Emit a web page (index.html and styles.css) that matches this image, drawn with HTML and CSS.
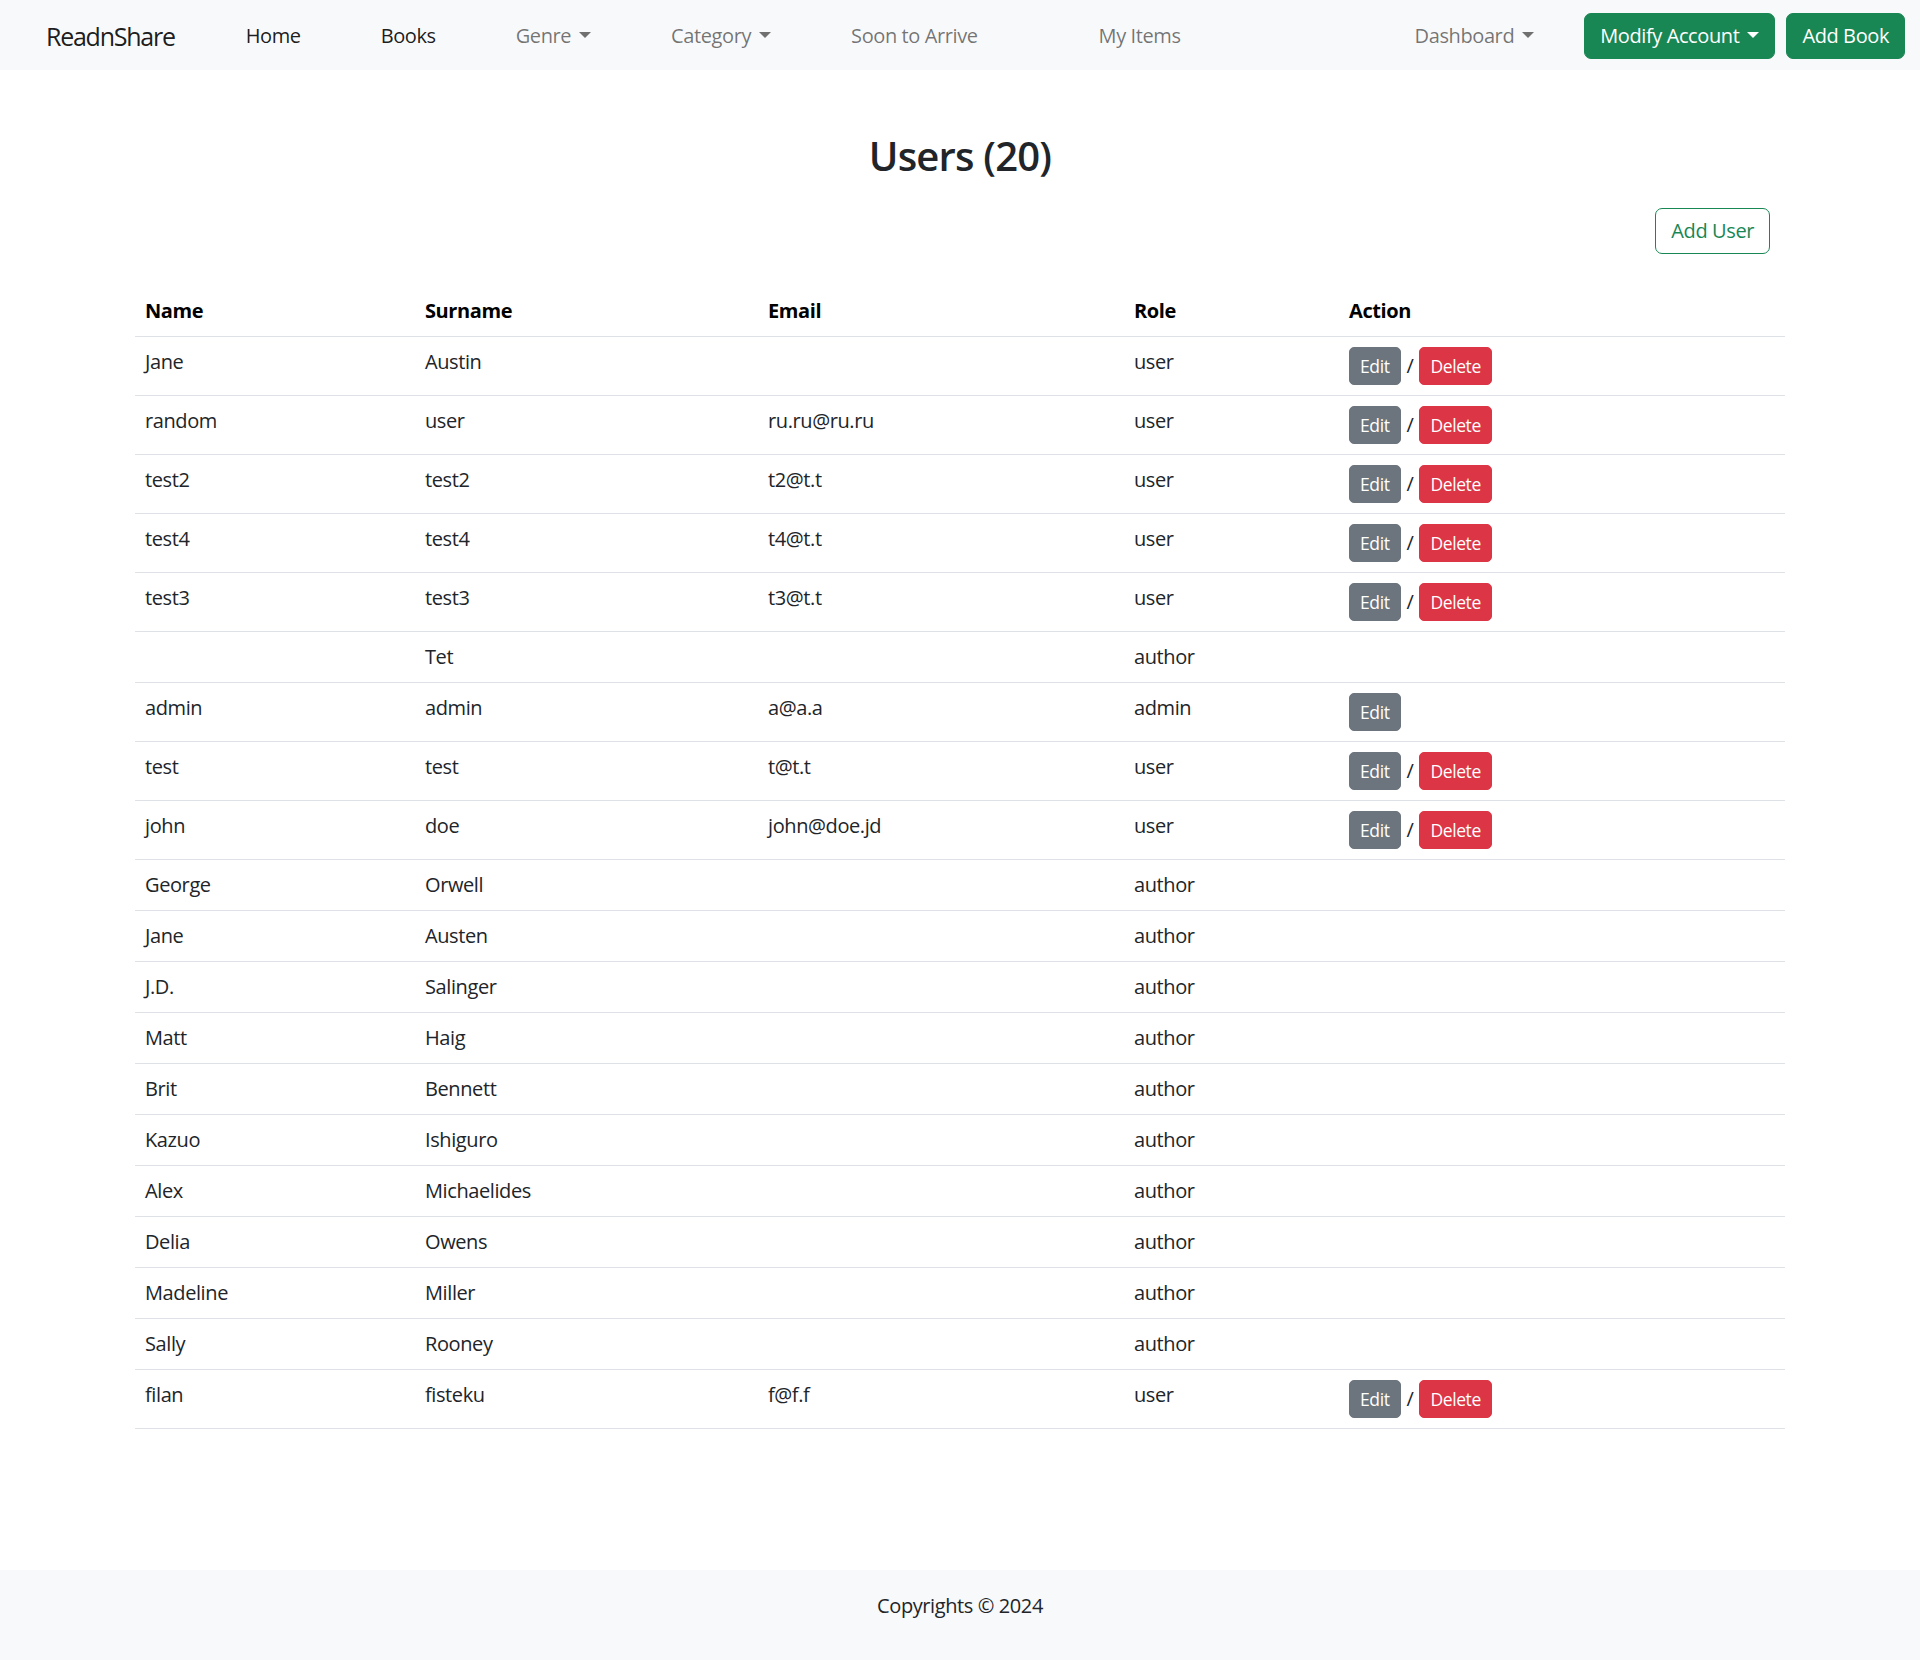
FILE: index.html
```html
<!DOCTYPE html>
<html lang="en">
<head>
<meta charset="utf-8">
<title>ReadnShare - Users</title>
<link rel="stylesheet" href="styles.css">
</head>
<body>
<nav class="navbar">
  <a class="brand" href="#">ReadnShare</a>
  <ul class="nav-main">
    <li><a class="nav-link active" href="#">Home</a></li>
    <li><a class="nav-link active" href="#">Books</a></li>
    <li><a class="nav-link dropdown" href="#">Genre</a></li>
    <li><a class="nav-link dropdown" href="#">Category</a></li>
    <li><a class="nav-link" href="#">Soon to Arrive</a></li>
    <li class="nav-spaced"><a class="nav-link" href="#">My Items</a></li>
  </ul>
  <div class="nav-right">
    <a class="nav-link dropdown dash" href="#">Dashboard</a>
    <a class="btn btn-success dropdown" href="#">Modify Account</a>
    <a class="btn btn-success" href="#">Add Book</a>
  </div>
</nav>

<main class="page">
  <h2 class="title">Users (20)</h2>
  <div class="toolbar">
    <a class="btn btn-outline-success" href="#">Add User</a>
  </div>
  <table class="table">
    <colgroup>
      <col class="c-name"><col class="c-surname"><col class="c-email"><col class="c-role"><col class="c-action">
    </colgroup>
    <thead>
      <tr><th>Name</th><th>Surname</th><th>Email</th><th>Role</th><th>Action</th></tr>
    </thead>
    <tbody>
      <tr><td>Jane</td><td>Austin</td><td></td><td>user</td><td class="act"><div class="actions"><a class="btn-sm btn-secondary" href="#">Edit</a><span>/</span><a class="btn-sm btn-danger" href="#">Delete</a></div></td></tr>
      <tr><td>random</td><td>user</td><td>ru.ru@ru.ru</td><td>user</td><td class="act"><div class="actions"><a class="btn-sm btn-secondary" href="#">Edit</a><span>/</span><a class="btn-sm btn-danger" href="#">Delete</a></div></td></tr>
      <tr><td>test2</td><td>test2</td><td>t2@t.t</td><td>user</td><td class="act"><div class="actions"><a class="btn-sm btn-secondary" href="#">Edit</a><span>/</span><a class="btn-sm btn-danger" href="#">Delete</a></div></td></tr>
      <tr><td>test4</td><td>test4</td><td>t4@t.t</td><td>user</td><td class="act"><div class="actions"><a class="btn-sm btn-secondary" href="#">Edit</a><span>/</span><a class="btn-sm btn-danger" href="#">Delete</a></div></td></tr>
      <tr><td>test3</td><td>test3</td><td>t3@t.t</td><td>user</td><td class="act"><div class="actions"><a class="btn-sm btn-secondary" href="#">Edit</a><span>/</span><a class="btn-sm btn-danger" href="#">Delete</a></div></td></tr>
      <tr><td></td><td>Tet</td><td></td><td>author</td><td></td></tr>
      <tr><td>admin</td><td>admin</td><td>a@a.a</td><td>admin</td><td class="act"><div class="actions"><a class="btn-sm btn-secondary" href="#">Edit</a></div></td></tr>
      <tr><td>test</td><td>test</td><td>t@t.t</td><td>user</td><td class="act"><div class="actions"><a class="btn-sm btn-secondary" href="#">Edit</a><span>/</span><a class="btn-sm btn-danger" href="#">Delete</a></div></td></tr>
      <tr><td>john</td><td>doe</td><td>john@doe.jd</td><td>user</td><td class="act"><div class="actions"><a class="btn-sm btn-secondary" href="#">Edit</a><span>/</span><a class="btn-sm btn-danger" href="#">Delete</a></div></td></tr>
      <tr><td>George</td><td>Orwell</td><td></td><td>author</td><td></td></tr>
      <tr><td>Jane</td><td>Austen</td><td></td><td>author</td><td></td></tr>
      <tr><td>J.D.</td><td>Salinger</td><td></td><td>author</td><td></td></tr>
      <tr><td>Matt</td><td>Haig</td><td></td><td>author</td><td></td></tr>
      <tr><td>Brit</td><td>Bennett</td><td></td><td>author</td><td></td></tr>
      <tr><td>Kazuo</td><td>Ishiguro</td><td></td><td>author</td><td></td></tr>
      <tr><td>Alex</td><td>Michaelides</td><td></td><td>author</td><td></td></tr>
      <tr><td>Delia</td><td>Owens</td><td></td><td>author</td><td></td></tr>
      <tr><td>Madeline</td><td>Miller</td><td></td><td>author</td><td></td></tr>
      <tr><td>Sally</td><td>Rooney</td><td></td><td>author</td><td></td></tr>
      <tr><td>filan</td><td>fisteku</td><td>f@f.f</td><td>user</td><td class="act"><div class="actions"><a class="btn-sm btn-secondary" href="#">Edit</a><span>/</span><a class="btn-sm btn-danger" href="#">Delete</a></div></td></tr>
    </tbody>
  </table>
</main>

<footer class="footer">Copyrights © 2024</footer>
</body>
</html>
```

FILE: styles.css
```css
* { box-sizing: border-box; }

html, body { margin: 0; padding: 0; }

body {
  font-family: "Open Sans", "Noto Sans", sans-serif;
  font-size: 20px;
  line-height: 30px;
  color: #212529;
  background: #fff;
  min-height: 100vh;
  display: flex;
  flex-direction: column;
  letter-spacing: -0.02em;
}

a { text-decoration: none; }

/* Navbar */
.navbar {
  height: 70px;
  background: #f8f9fa;
  display: flex;
  align-items: center;
  padding: 2px 15px 0 46px;
}

.brand {
  font-size: 25px;
  line-height: 37px;
  letter-spacing: -0.05em;
  color: rgba(0, 0, 0, 0.9);
}

.nav-main {
  list-style: none;
  margin: 0 0 0 71px;
  padding: 0;
  display: flex;
  gap: 80px;
}

.nav-spaced { margin-left: 41px; }

.nav-link {
  display: inline-block;
  color: rgba(0, 0, 0, 0.55);
  line-height: 30px;
  padding: 10px 0;
}

.nav-link.active { color: rgba(0, 0, 0, 0.9); }

.dropdown::after {
  content: "";
  display: inline-block;
  margin-left: 8px;
  vertical-align: 5px;
  border-top: 6px solid currentColor;
  border-left: 6px solid transparent;
  border-right: 6px solid transparent;
}

.nav-right {
  margin-left: auto;
  display: flex;
  align-items: center;
}

.dash { margin-right: 50px; }

.btn {
  display: inline-block;
  font-size: 20px;
  line-height: 30px;
  padding: 7px 15px;
  border: 1px solid transparent;
  border-radius: 7px;
}

.btn-success {
  background: #198754;
  border-color: #198754;
  color: #fff;
}

.btn-success + .btn-success { margin-left: 11px; }

.btn-outline-success {
  color: #198754;
  border-color: #198754;
  background: #fff;
}

/* Page */
.page {
  flex: 1;
  width: 1650px;
  margin: 0 auto;
}

.title {
  margin: 62px 0 10px;
  font-size: 40px;
  line-height: 48px;
  font-weight: 600;
  text-align: center;
  letter-spacing: -0.02em;
}

.toolbar {
  margin-top: 28px;
  padding-right: 15px;
  text-align: right;
}

.table {
  margin-top: 32px;
  width: 100%;
  border-collapse: collapse;
  table-layout: fixed;
}

.c-name { width: 280px; }
.c-surname { width: 343px; }
.c-email { width: 366px; }
.c-role { width: 215px; }
.c-action { width: 446px; }

.table th,
.table td {
  text-align: left;
  vertical-align: top;
  padding: 10px 10px;
  border-bottom: 1px solid #dee2e6;
  line-height: 30px;
}

.table th { font-weight: 700; color: #000; }

.actions {
  display: flex;
  align-items: center;
  gap: 6px;
}

.btn-sm {
  display: inline-block;
  font-size: 17.5px;
  line-height: 26px;
  padding: 5px 10px;
  border: 1px solid transparent;
  border-radius: 5px;
  color: #fff;
}

.btn-secondary { background: #6c757d; border-color: #6c757d; }
.btn-danger { background: #dc3545; border-color: #dc3545; }

/* Footer */
.footer {
  height: 90px;
  background: #f8f9fa;
  padding-top: 21px;
  text-align: center;
  line-height: 30px;
}
```
